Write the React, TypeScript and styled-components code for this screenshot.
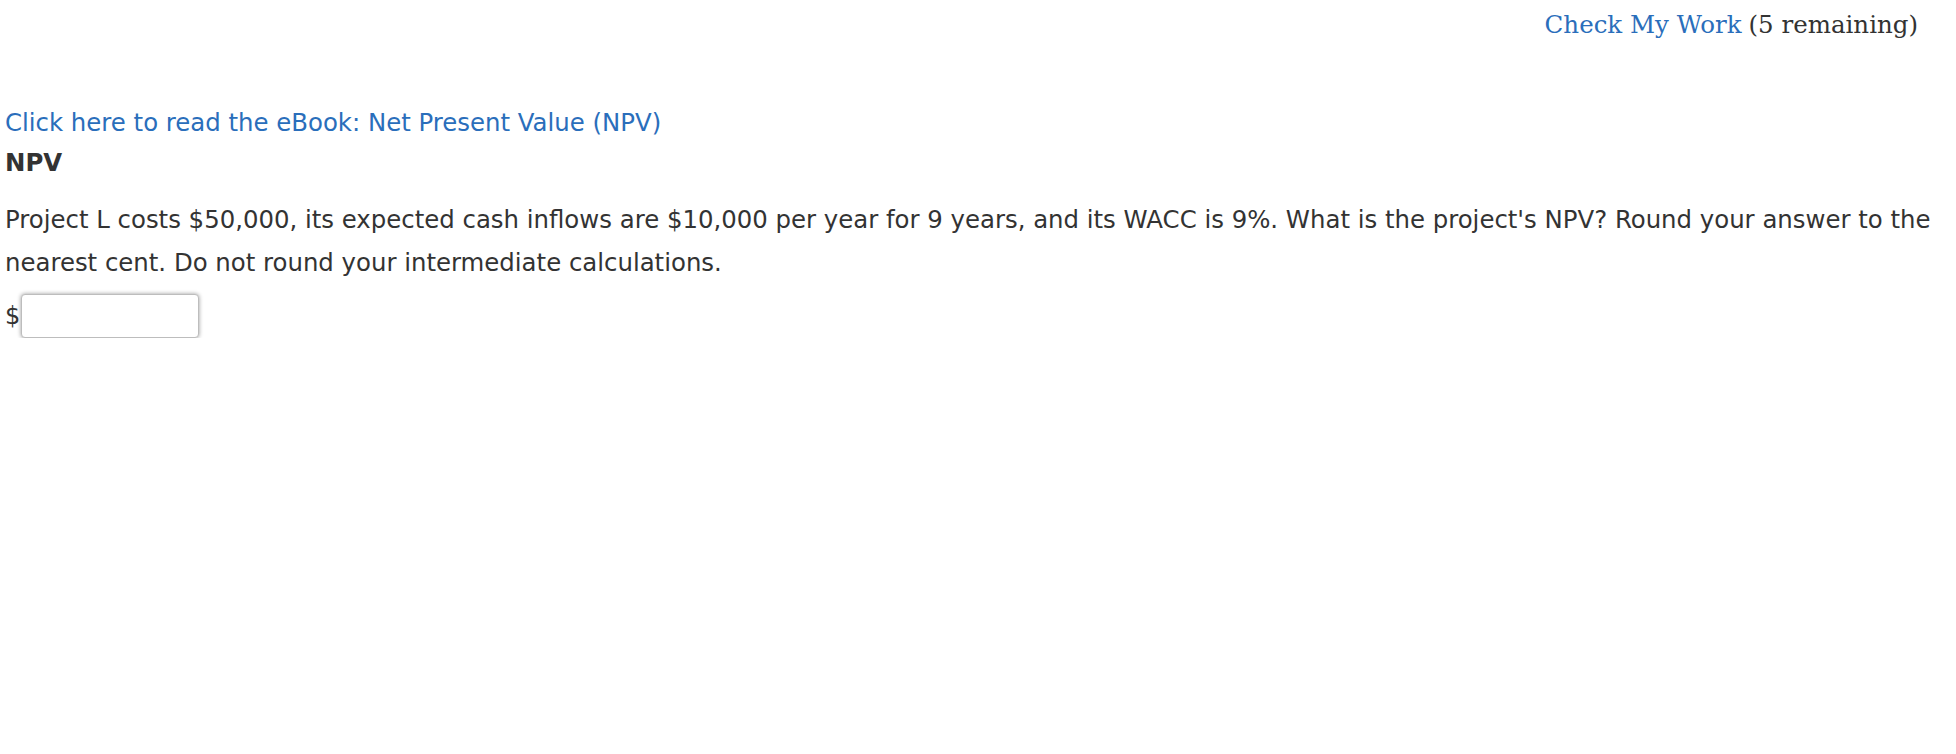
import React from "react";
import styled, { createGlobalStyle } from "styled-components";

const GlobalStyle = createGlobalStyle`
  html, body { margin: 0; padding: 0; background: #ffffff; }
  body { font-family: "DejaVu Sans", Verdana, sans-serif; color: #333333; }
`;

const Page = styled.div`
  display: flex;
  flex-direction: column;
  padding: 0 20px 0 5px;
`;

const TopBar = styled.div`
  display: flex;
  justify-content: flex-end;
  align-items: baseline;
  gap: 7px;
  padding: 10px 18px 0 0;
  height: 30px;
  line-height: 30px;
  font-family: "DejaVu Serif", Georgia, serif;
  font-size: 24.5px;
  color: #333333;
`;

const CheckLink = styled.a`
  color: #2a6ebb;
  text-decoration: none;
  cursor: pointer;
`;

const Remaining = styled.span`
  color: #333333;
`;

const Content = styled.div`
  display: flex;
  flex-direction: column;
  margin-top: 68px;
  font-size: 24.4px;
`;

const EbookLink = styled.a`
  color: #2a6ebb;
  text-decoration: none;
  line-height: 30px;
  cursor: pointer;
`;

const Title = styled.div`
  font-weight: bold;
  line-height: 30px;
  margin-top: 10px;
  color: #333333;
`;

const Question = styled.p`
  margin: 20px 0 0;
  line-height: 43px;
  color: #333333;
`;

const AnswerRow = styled.div`
  display: flex;
  align-items: center;
  margin-top: 10px;
`;

const Currency = styled.span`
  color: #333333;
  font-size: 24px;
  margin-right: 1px;
`;

const AnswerInput = styled.input`
  width: 178px;
  height: 44px;
  box-sizing: border-box;
  border: 1px solid #bdbdbd;
  border-radius: 4px;
  box-shadow: 0 0 4px rgba(0, 0, 0, 0.4);
  background: #ffffff;
  font-size: 24px;
  outline: none;
`;

export default function App() {
  return (
    <>
      <GlobalStyle />
      <Page>
        <TopBar>
          <CheckLink>Check My Work</CheckLink>
          <Remaining>(5 remaining)</Remaining>
        </TopBar>
        <Content>
          <EbookLink>Click here to read the eBook: Net Present Value (NPV)</EbookLink>
          <Title>NPV</Title>
          <Question>
            Project L costs $50,000, its expected cash inflows are $10,000 per year for 9 years, and its WACC is 9%. What is the project's NPV? Round your answer to the nearest cent. Do not round your intermediate calculations.
          </Question>
          <AnswerRow>
            <Currency>$</Currency>
            <AnswerInput type="text" aria-label="NPV answer" />
          </AnswerRow>
        </Content>
      </Page>
    </>
  );
}
